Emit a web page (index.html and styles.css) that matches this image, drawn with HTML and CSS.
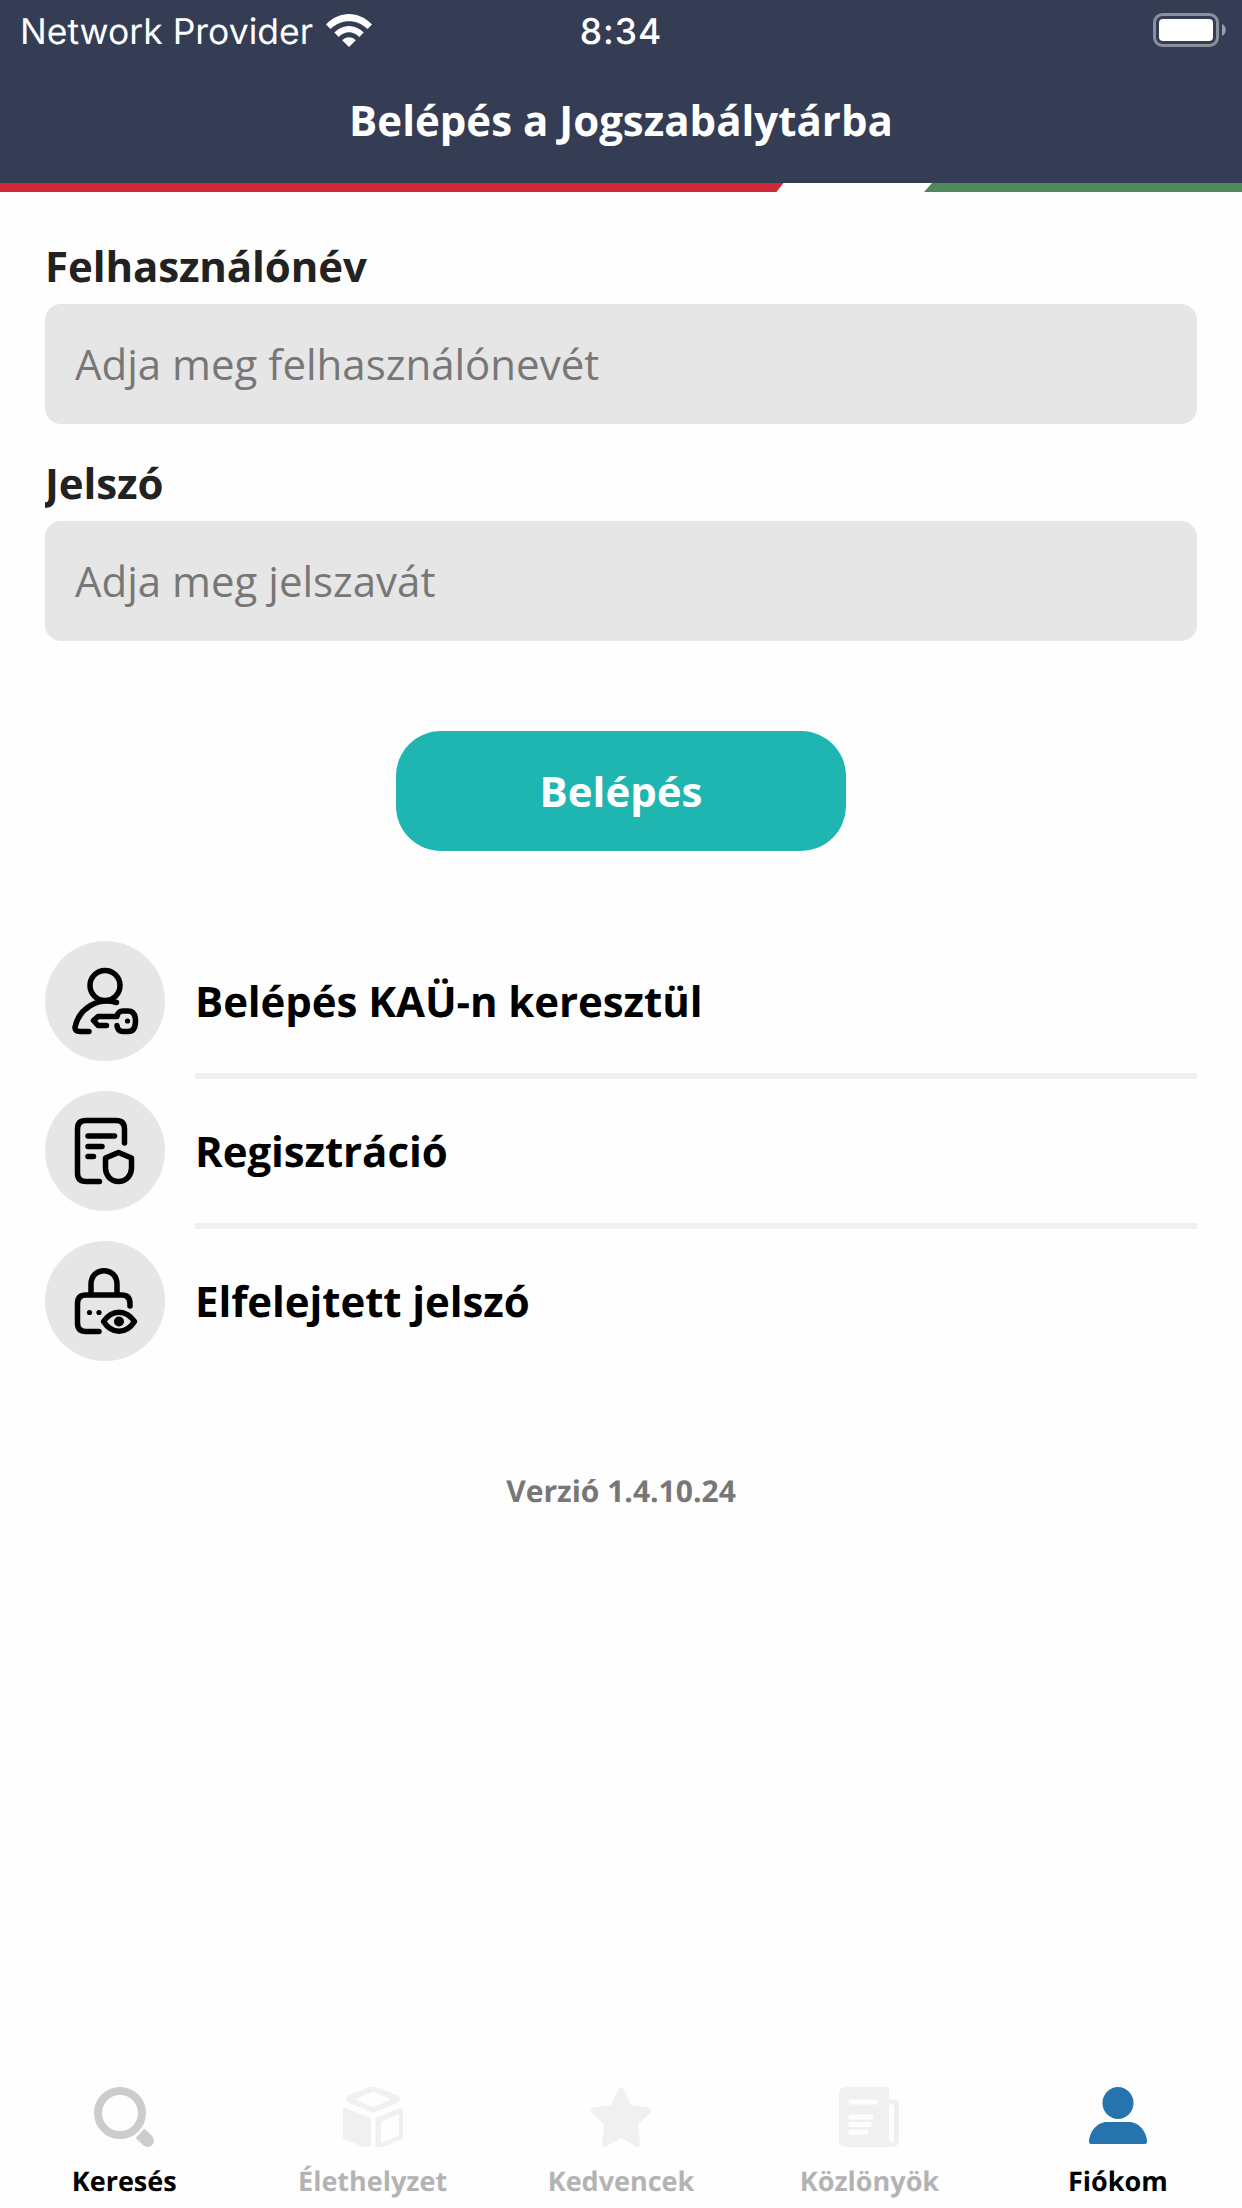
FILE: index.html
```html
<!doctype html>
<html lang="hu">
<head>
  <meta charset="utf-8">
  <title>Belépés a Jogszabálytárba</title>
  <link rel="stylesheet" href="styles.css">
</head>
<body>

<header>
  <div class="status-bar">
    <div class="carrier">
      <span class="provider">Network Provider</span>
      <svg class="wifi" width="46" height="33" viewBox="0 0 46 33">
        <path d="M0 10.5C13-3.500 33-3.500 46 10.500L41.500 15C31 4.500 15 4.500 4.500 15Z"/>
        <path d="M8.300 18.500C16.500 9.700 29.500 9.700 37.700 18.500L33.300 23C27 16.800 19 16.800 12.700 23Z"/>
        <path d="M16.200 26.300C20 22.300 26 22.300 29.800 26.300L23 33Z"/>
      </svg>
    </div>
    <span class="time">8:34</span>
    <div class="status-right">
      <svg width="73" height="34" viewBox="0 0 73 34">
        <rect class="battery-frame" x="1.500" y="1.500" width="63" height="31" rx="8"/>
        <rect x="6" y="6" width="54" height="22" rx="4"/>
        <path class="battery-tip" d="M69 11C74 13 74 21 69 23Z"/>
      </svg>
    </div>
  </div>
  <h1>Belépés a Jogszabálytárba</h1>
  <svg class="flag" width="1242" height="9" viewBox="0 0 1242 9">
    <path class="red" d="M0 0H783.500L776.500 9H0Z"/>
    <path class="green" d="M932 0H1242V9H924Z"/>
  </svg>
</header>

<main>
  <form id="loginForm">
    <label for="username">Felhasználónév</label>
    <input type="text" id="username" placeholder="Adja meg felhasználónevét">
    <label for="password">Jelszó</label>
    <input type="password" id="password" placeholder="Adja meg jelszavát">
    <button type="submit">Belépés</button>
  </form>

  <ul class="links">
    <li>
      <span class="circle">
        <svg width="120" height="120" viewBox="0 0 120 120">
          <circle cx="60" cy="44.500" r="15"/>
          <path d="M71.500 61.500C52 56 34 68 30 86Q29.500 90.500 35 90.500H44"/>
          <path d="M61.500 84.500H53L48.500 79.500L53 75.500H72Q73 70 78 70H83C88.500 70 90.500 74 90.500 80S88.500 90.500 83 90.500H78Q72.500 90.500 72 84.500"/>
          <circle class="dot" cx="82.500" cy="80" r="2.600"/>
        </svg>
      </span>
      <span class="text">Belépés KAÜ-n keresztül</span>
    </li>
    <li>
      <span class="circle">
        <svg width="120" height="120" viewBox="0 0 120 120">
          <path d="M54.500 90.500H41Q32.500 90.500 32.500 82V38Q32.500 29.500 41 29.500H71Q79.500 29.500 79.500 38V52"/>
          <path d="M43 45H69.500M43 55.500H57M43 65.500H48.500"/>
          <path d="M73.500 61.500L86.500 67V77C86.500 84 81.500 90.500 73.500 90.500S60.500 84 60.500 77V67Z"/>
        </svg>
      </span>
      <span class="text">Regisztráció</span>
    </li>
    <li>
      <span class="circle">
        <svg width="120" height="120" viewBox="0 0 120 120">
          <path d="M46 53V43.500C46 25 72 25 72 43.500V53"/>
          <path d="M54 90.500H41Q32.500 90.500 32.500 82V62.500Q32.500 54 41 54H76.500Q85 54 85 62.500V65"/>
          <circle class="dot" cx="44.500" cy="71.500" r="2.600"/>
          <circle class="dot" cx="54" cy="71.500" r="2.600"/>
          <path d="M58.500 80.500C67 68 81 68 89.500 80.500C81 93.500 67 93.500 58.500 80.500Z"/>
          <circle class="dot" cx="74" cy="80.500" r="5"/>
        </svg>
      </span>
      <span class="text">Elfelejtett jelszó</span>
    </li>
  </ul>

  <p class="version">Verzió 1.4.10.24</p>
</main>

<nav>
  <a class="tab search">
    <svg width="60" height="60" viewBox="0 0 60 60">
      <circle cx="26" cy="26" r="22" fill="none" stroke="currentColor" stroke-width="8"/>
      <path d="M42 50.500L49.500 42.500Q50.500 41.500 51.500 42.500L58 49Q62 54 58 58.200Q53.500 62 49 58L42 51.500Z"/>
    </svg>
    <span>Keresés</span>
  </a>
  <a class="tab disabled">
    <svg width="60" height="60" viewBox="0 0 60 60">
      <path fill-rule="evenodd" d="M26.500 0H33.500L55 8.500Q59 12 55 15.500L30 26L5 15.500Q1 12 5 8.500ZM30 4.500L12 12.500L30 20.500L48 12.500Z"/>
      <path d="M0 20.500L3 21L26 30.500Q28 31.500 28 34V60H20L0 51.500Z"/>
      <path fill-rule="evenodd" d="M60 20.500L57 21L34 30.500Q32.500 31.500 32.500 34V60H40L60 51.500ZM56 27L38 34.500V56L56 48.500Z"/>
    </svg>
    <span>Élethelyzet</span>
  </a>
  <a class="tab disabled">
    <svg width="60" height="60" viewBox="0 0 60 60">
      <path d="M28 1.500Q30 -1.500 32 1.500L39.500 17Q40 18 42 18.200L58 20.500Q61.500 22 59.500 25.500L47.500 37Q46.700 38 47 39.500L49.200 57Q49 61 45.500 59.700L30 51L14.500 59.700Q11 61 10.800 57L13 39.500Q13.300 38 12.500 37L0.500 25.500Q-1.500 22 2 20.500L18 18.200Q20 18 20.500 17Z"/>
    </svg>
    <span>Kedvencek</span>
  </a>
  <a class="tab disabled">
    <svg width="60" height="60" viewBox="0 0 60 60">
      <path fill-rule="evenodd" d="M7 0H48Q50 0 50 2V12.500H58Q60 12.500 60 14.500V53Q60 60 53 60H7Q0 60 0 53V7Q0 0 7 0ZM50 17.500V52.500Q50 55 52.500 55T55 52.500V17.500Z"/>
      <path class="lines" d="M12 15H36.500M12 30H32M12 37.500H30M12 45.200H27"/>
    </svg>
    <span>Közlönyök</span>
  </a>
  <a class="tab active">
    <svg width="60" height="60" viewBox="0 0 60 60">
      <ellipse cx="30" cy="16" rx="15.500" ry="16"/>
      <path d="M19 35H41C51 35 59 45 59 55Q59 57 57 57H3Q1 57 1 55C1 45 9 35 19 35Z"/>
    </svg>
    <span>Fiókom</span>
  </a>
</nav>

</body>
</html>
```
FILE: styles.css
```css
* {
  box-sizing: border-box;
}
body {
  margin: 0;
  height: 2208px;
  display: flex;
  flex-direction: column;
  background: #fefefe;
  font-family: "Open Sans", sans-serif;
  font-size: 42px;
  text-rendering: geometricPrecision;
}
header {
  height: 192px;
  background: #343d54;
  color: #fff;
  display: flex;
  flex-direction: column;
}
.status-bar {
  height: 60px;
  padding: 0 16px 0 20px;
  display: grid;
  grid-template-columns: 1fr auto 1fr;
  align-items: center;
  font-family: Inter, sans-serif;
  font-size: 35.5px;
}
.status-bar svg {
  fill: #fff;
}
.carrier {
  display: flex;
  align-items: center;
  gap: 13px;
}
.provider {
  margin-top: 3px;
}
.time {
  margin: 3px 4px 0 0;
  font-weight: 500;
  letter-spacing: 1px;
}
.status-right {
  display: flex;
  justify-content: flex-end;
}
.status-bar .battery-frame {
  fill: none;
  stroke: #8b909d;
  stroke-width: 3;
}
.status-bar .battery-tip {
  fill: #999ea9;
}
h1 {
  flex: 1;
  margin: 0;
  font-size: 42px;
  font-weight: 700;
  line-height: 122px;
  text-align: center;
}
.flag {
  display: block;
  background: #fff;
}
.red {
  fill: #cf2a38;
}
.green {
  fill: #4f895b;
}
main {
  flex: 1;
  padding: 46px 45px 0;
}
form {
  display: flex;
  flex-direction: column;
}
label {
  height: 57px;
  margin-bottom: 9px;
  line-height: 57px;
  font-weight: 700;
  letter-spacing: -0.1px;
  color: #222;
  overflow: hidden;
}
input {
  height: 120px;
  margin-bottom: 31px;
  padding: 0 30px 2px;
  border: 0;
  border-radius: 16px;
  background: #e6e6e6;
  font: inherit;
}
input::placeholder {
  color: #777;
}
button {
  align-self: center;
  width: 450px;
  height: 120px;
  margin-top: 59px;
  padding: 0 0 2px;
  border: 0;
  border-radius: 45px;
  background: #1fb6b2;
  color: #fff;
  font: inherit;
  font-weight: 700;
}
.links {
  list-style: none;
  margin: 90px 0 0;
  padding: 0;
}
.links li {
  display: flex;
  gap: 30px;
  height: 150px;
}
.circle {
  width: 120px;
  height: 120px;
  border-radius: 50%;
  background: #e6e6e6;
}
.circle svg {
  display: block;
  fill: none;
  stroke: #000;
  stroke-width: 5.5;
  stroke-linecap: round;
  stroke-linejoin: round;
}
.circle .dot {
  fill: #000;
  stroke: none;
}
.text {
  flex: 1;
  height: 138px;
  line-height: 122px;
  font-weight: 700;
  letter-spacing: -0.08px;
  border-bottom: 6px solid #f0f0f0;
}
.links li:last-child .text {
  border: 0;
}
.version {
  margin: 79px 0 0;
  font-size: 30px;
  line-height: 41px;
  font-weight: 700;
  text-align: center;
  color: #777;
}
nav {
  display: flex;
  height: 121px;
}
.tab {
  flex: 1;
  display: flex;
  flex-direction: column;
  align-items: center;
  font-size: 27px;
  line-height: 37px;
  font-weight: 700;
}
.tab svg {
  margin-bottom: 15px;
  fill: currentColor;
}
.search svg {
  color: #ccc;
}
.disabled {
  color: #b3b3b3;
}
.disabled svg {
  color: #f0f0f0;
}
.active svg {
  color: #2574ad;
}
.tab .lines {
  fill: none;
  stroke: #fefefe;
  stroke-width: 5;
  stroke-linecap: round;
}
```
